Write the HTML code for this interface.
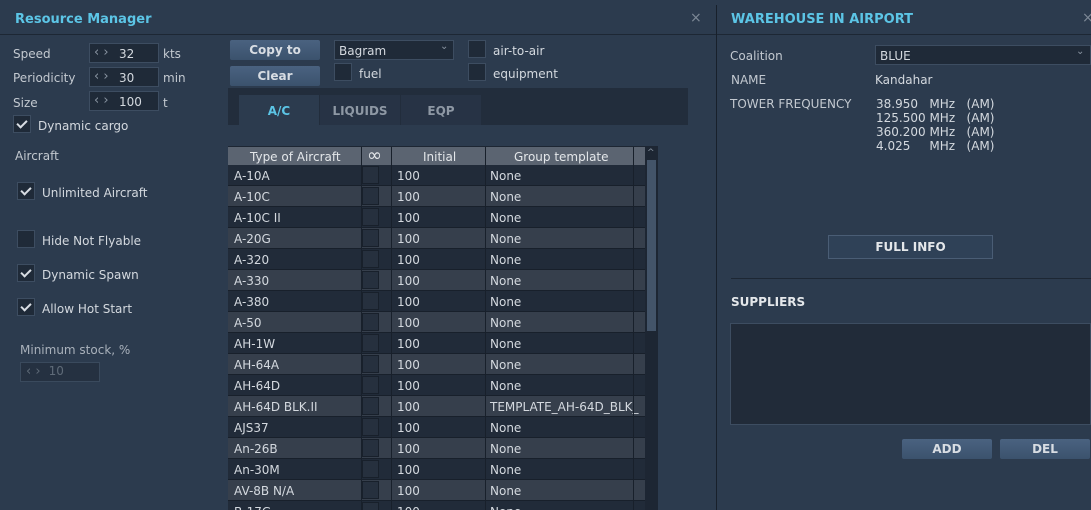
<!DOCTYPE html>
<html style="width:1091px;height:510px;overflow:hidden"><head><meta charset="utf-8"><style>
*{box-sizing:border-box;margin:0;padding:0}
body{width:1091px;height:510px;overflow:hidden;background:#2c3b4e;font-family:"DejaVu Sans","Liberation Sans",sans-serif;font-size:12px;color:#d4d9df;position:relative}
.a{position:absolute;white-space:nowrap}
.t{color:#5cc5e6;font-weight:bold;font-size:13px}
.inp{position:absolute;background:#1f2a38;border:1px solid #3d4d61;height:20px}
.cb{position:absolute;width:18px;height:18px;background:#1f2a38;border:1px solid #3d4d61}
.cb.on::after{content:"";position:absolute;left:5px;top:2px;width:4px;height:8px;border:solid #d8dde3;border-width:0 2px 2px 0;transform:rotate(45deg)}
.btn{position:absolute;background:linear-gradient(#4a6280,#3b526d);border-radius:2px;color:#d8dde3;font-weight:bold;text-align:center;font-size:12px}
.lbl{color:#c3c9d0}
.ar{color:#8a95a2;font-size:13px}
.row{position:absolute;left:228px;width:417px;height:21px}
.row span{position:absolute;top:4px}
</style></head><body>
<div class="a" style="left:716px;top:5px;width:1px;height:505px;background:#18202b"></div>
<div class="a" style="left:0;top:34px;width:716px;height:1px;background:#1d2734"></div>
<div class="a" style="left:717px;top:34px;width:374px;height:1px;background:#1d2734"></div>
<div class="a t" style="left:15px;top:12px">Resource Manager</div>
<div class="a" style="left:690px;top:10px;color:#7d8896;font-size:14px">×</div>
<div class="a t" style="left:731px;top:12px">WAREHOUSE IN AIRPORT</div>
<div class="a" style="left:1082px;top:10px;color:#7d8896;font-size:14px">×</div>

<div class="a lbl" style="left:13px;top:47px">Speed</div>
<div class="inp" style="left:89px;top:43px;width:70px"></div><div class="a ar" style="left:94px;top:45px">‹ ›</div><div class="a" style="left:119px;top:47px">32</div><div class="a lbl" style="left:163px;top:47px">kts</div>
<div class="a lbl" style="left:13px;top:71px">Periodicity</div>
<div class="inp" style="left:89px;top:67px;width:70px"></div><div class="a ar" style="left:94px;top:69px">‹ ›</div><div class="a" style="left:119px;top:71px">30</div><div class="a lbl" style="left:163px;top:71px">min</div>
<div class="a lbl" style="left:13px;top:96px">Size</div>
<div class="inp" style="left:89px;top:91px;width:70px"></div><div class="a ar" style="left:94px;top:93px">‹ ›</div><div class="a" style="left:119px;top:95px">100</div><div class="a lbl" style="left:163px;top:96px">t</div>
<div class="cb on" style="left:13px;top:115px"></div><div class="a" style="left:38px;top:119px">Dynamic cargo</div>
<div class="a lbl" style="left:15px;top:149px">Aircraft</div>
<div class="cb on" style="left:17px;top:182px"></div><div class="a" style="left:42px;top:186px">Unlimited Aircraft</div>
<div class="cb" style="left:17px;top:230px"></div><div class="a" style="left:42px;top:234px">Hide Not Flyable</div>
<div class="cb on" style="left:17px;top:264px"></div><div class="a" style="left:42px;top:268px">Dynamic Spawn</div>
<div class="cb on" style="left:17px;top:298px"></div><div class="a" style="left:42px;top:302px">Allow Hot Start</div>
<div class="a" style="left:20px;top:343px;color:#a9b1bb">Minimum stock, %</div>
<div class="inp" style="left:20px;top:362px;width:80px;background:#253141;border-color:#3a4a5d"></div><div class="a" style="left:26px;top:364px;color:#5f6b78;font-size:13px">‹ › <span style="margin-left:4px;font-size:12px">10</span></div>

<div class="btn" style="left:230px;top:40px;width:90px;height:20px;line-height:21px">Copy to</div>
<div class="btn" style="left:230px;top:66px;width:90px;height:20px;line-height:21px">Clear</div>
<div class="inp" style="left:334px;top:40px;width:120px;height:20px"></div><div class="a" style="left:339px;top:44px">Bagram</div><div class="a" style="left:440px;top:41px;color:#8a95a2;font-size:10px">⌄</div>
<div class="cb" style="left:334px;top:63px"></div><div class="a" style="left:359px;top:67px">fuel</div>
<div class="cb" style="left:468px;top:40px"></div><div class="a" style="left:493px;top:44px">air-to-air</div>
<div class="cb" style="left:468px;top:63px"></div><div class="a" style="left:493px;top:67px">equipment</div>

<div class="a" style="left:228px;top:88px;width:460px;height:37px;background:#222d3c"></div>
<div class="a" style="left:239px;top:95px;width:80px;height:30px;background:#2c3b4e;color:#5cc5e6;font-weight:bold;text-align:center;line-height:33px">A/C</div>
<div class="a" style="left:320px;top:95px;width:80px;height:30px;background:#273345;color:#8e98a4;font-weight:bold;text-align:center;line-height:33px">LIQUIDS</div>
<div class="a" style="left:401px;top:95px;width:80px;height:30px;background:#273345;color:#8e98a4;font-weight:bold;text-align:center;line-height:33px">EQP</div>

<div class="a" style="left:228px;top:146px;width:430px;height:364px;background:#1d2633"></div>
<div class="a" style="left:228px;top:147px;width:417px;height:18px;background:#5b6471"></div>
<div class="a" style="left:250px;top:150px;color:#e4e7ea">Type of Aircraft</div>
<div class="a" style="left:367px;top:145px;color:#e4e7ea;font-size:18px">∞</div>
<div class="a" style="left:423px;top:150px;color:#e4e7ea">Initial</div>
<div class="a" style="left:514px;top:150px;color:#e4e7ea">Group template</div>
<div class="a" style="left:647px;top:148px;color:#8a95a2;font-size:9px">^</div>
<div class="a" style="left:647px;top:160px;width:9px;height:171px;background:#435469"></div>
<div id="rows"></div>
<div class="a" style="left:361px;top:147px;width:1px;height:363px;background:#18202b"></div>
<div class="a" style="left:391px;top:147px;width:1px;height:363px;background:#18202b"></div>
<div class="a" style="left:485px;top:147px;width:1px;height:363px;background:#18202b"></div>
<div class="a" style="left:633px;top:147px;width:1px;height:363px;background:#18202b"></div>

<div class="a lbl" style="left:730px;top:49px">Coalition</div>
<div class="inp" style="left:875px;top:45px;width:216px;height:20px"></div><div class="a" style="left:880px;top:49px">BLUE</div><div class="a" style="left:1076px;top:46px;color:#8a95a2;font-size:10px">⌄</div>
<div class="a lbl" style="left:731px;top:73px">NAME</div>
<div class="a" style="left:875px;top:73px">Kandahar</div>
<div class="a lbl" style="left:730px;top:97px">TOWER FREQUENCY</div>
<div class="a" style="left:876px;top:97px;line-height:14px;white-space:pre">38.950   MHz   (AM)
125.500 MHz   (AM)
360.200 MHz   (AM)
4.025     MHz   (AM)</div>
<div class="a" style="left:828px;top:235px;width:165px;height:24px;background:#2f4157;border:1px solid #4a5d75;color:#e4e7ea;font-weight:bold;text-align:center;line-height:23px">FULL INFO</div>
<div class="a" style="left:731px;top:278px;width:360px;height:1px;background:#1d2734"></div>
<div class="a" style="left:731px;top:295px;color:#e4e7ea;font-weight:bold">SUPPLIERS</div>
<div class="a" style="left:730px;top:323px;width:361px;height:102px;background:#212b39;border:1px solid #3d4d61"></div>
<div class="btn" style="left:902px;top:439px;width:90px;height:20px;line-height:21px">ADD</div>
<div class="btn" style="left:1000px;top:439px;width:90px;height:20px;line-height:21px">DEL</div>
<script>
var n=["A-10A","A-10C","A-10C II","A-20G","A-320","A-330","A-380","A-50","AH-1W","AH-64A","AH-64D","AH-64D BLK.II","AJS37","An-26B","An-30M","AV-8B N/A","B-17G"];
var h="";n.forEach(function(x,i){var t=i==11?"TEMPLATE_AH-64D_BLK_":"None";
h+='<div class="row" style="top:'+(165+i*21)+'px;background:'+(i%2?'#363f4c':'#212b39')+';border-bottom:1px solid #18202b"><span style="left:6px">'+x+'</span><div style="position:absolute;left:134px;top:1px;width:17px;height:18px;border:1px solid #18202b;background:#26303e"></div><span style="left:169px">100</span><span style="left:262px">'+t+'</span></div>';});
document.getElementById("rows").innerHTML=h;
</script>
</body></html>
